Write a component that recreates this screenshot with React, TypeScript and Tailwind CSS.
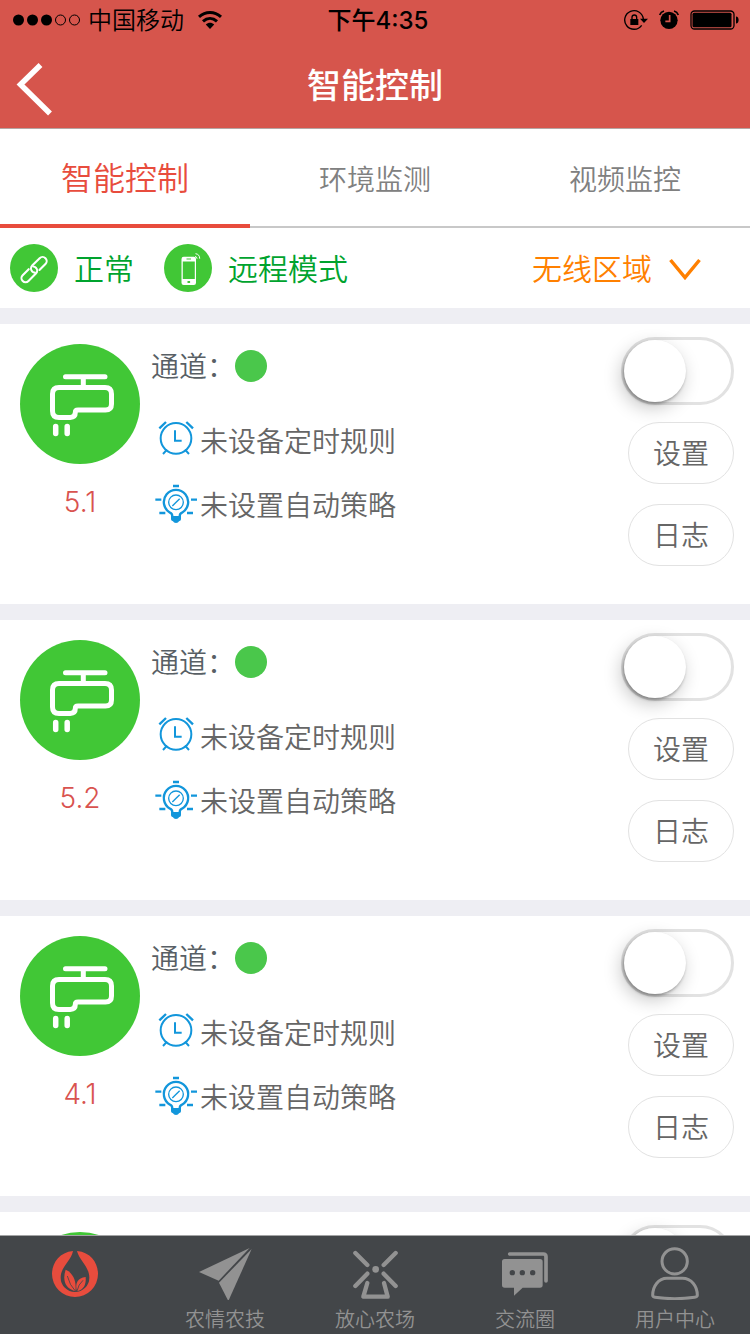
import { useState } from 'react';
import type { ReactNode } from 'react';

interface Channel {
  id: string;
  timer: string;
  strategy: string;
}

const CHANNELS: Channel[] = [
  { id: '5.1', timer: '未设备定时规则', strategy: '未设置自动策略' },
  { id: '5.2', timer: '未设备定时规则', strategy: '未设置自动策略' },
  { id: '4.1', timer: '未设备定时规则', strategy: '未设置自动策略' },
  { id: '4.2', timer: '未设备定时规则', strategy: '未设置自动策略' },
];

const TABS = ['智能控制', '环境监测', '视频监控'];

function StatusBar() {
  return (
    <div className="grid h-10 grid-cols-3 items-center pl-3 pr-[11px] text-2xl text-black">
      <div className="flex items-center">
        <svg width="70" height="14" viewBox="0 0 70 14" className="mr-[6px]" aria-hidden="true">
          <circle cx="6.5" cy="7" r="5.5" />
          <circle cx="20.5" cy="7" r="5.5" />
          <circle cx="34.5" cy="7" r="5.5" />
          <circle cx="48.5" cy="7" r="5" fill="none" stroke="black" />
          <circle cx="62.5" cy="7" r="5" fill="none" stroke="black" />
        </svg>
        <span className="pt-[2px]">中国移动</span>
        <svg width="26" height="20" viewBox="0 0 26 20" className="ml-[13px]" fill="none" stroke="black" strokeWidth="3" aria-hidden="true">
          <path d="M2 6.8C8.5.9 17.5.9 24 6.8" />
          <path d="M6 11.3c4.2-3.8 9.800-3.800 14 0" />
          <path d="M8.8 14.5c2.600-2.300 5.800-2.300 8.400 0L13 19z" fill="black" stroke="none" />
        </svg>
      </div>
      <div className="pl-[5px] pt-[2px] text-center font-medium">下午4:35</div>
      <div className="flex items-center justify-end gap-[11px]">
        <svg width="24" height="22" viewBox="68 27 72 66" aria-hidden="true">
          <path d="M121 76a28 28 0 1 1 5-19" fill="none" stroke="black" strokeWidth="4" />
          <path d="M116 56h24l-12 13z" />
          <path d="M87 57h24v18H87z" />
          <path d="M92 58v-6a7 7 0 0 1 14 0v6" fill="none" stroke="black" strokeWidth="4" />
        </svg>
        <svg width="20" height="22" viewBox="176 27 60 66" aria-hidden="true">
          <circle cx="206" cy="61" r="26" />
          <path d="M178 45q3-9 13-12M234 45q-3-9-13-12" fill="none" stroke="black" strokeWidth="5" />
          <path d="M208 45v19h-13" fill="none" stroke="#d6554c" strokeWidth="5" />
        </svg>
        <svg width="49" height="20" viewBox="0 0 49 20" aria-hidden="true">
          <rect x="1" y="1" width="43" height="18" rx="3.5" fill="none" stroke="black" strokeWidth="1.3" />
          <rect x="2.5" y="2.7" width="39" height="14.6" rx="1.5" />
          <path d="M46 6.5c3.500 0 3.500 7 0 7z" />
        </svg>
      </div>
    </div>
  );
}

function LinkIcon() {
  return (
    <svg className="size-12" viewBox="0 0 48 48" fill="none" aria-hidden="true">
      <circle cx="24" cy="24" r="24" fill="#41c736" />
      <g transform="rotate(-45 24 25.5)" stroke="white" strokeWidth="2.1" strokeLinecap="round">
        <path d="M20.5 21.5H12a4.100 4.100 0 0 0 0 8.200h10.500a4.100 4.100 0 0 0 4.100-4.100q0-1.600-1-2.700" />
        <path d="M27.5 29.7H36a4.100 4.100 0 0 0 0-8.200H25.500a4.100 4.100 0 0 0-4.100 4.100q0 1.600 1 2.700" />
      </g>
    </svg>
  );
}

function PhoneIcon() {
  return (
    <svg className="size-12" viewBox="0 0 48 48" aria-hidden="true">
      <circle cx="24" cy="24" r="24" fill="#41c736" />
      <rect x="17.5" y="12.7" width="14.5" height="28.3" rx="2.2" fill="white" />
      <path d="M18.800 17.500h12V35h-12zM22.500 14.500h4.500v1h-4.500zM23.500 37h2.600v2h-2.600z" fill="#41c736" />
      <path d="M31 12.500q2 .2 2 2.200M31.500 9.700q4.200.5 4.200 5" fill="none" stroke="white" />
    </svg>
  );
}

function FaucetIcon() {
  return (
    <svg className="size-[120px]" viewBox="0 0 120 120" fill="none" aria-hidden="true">
      <circle cx="60" cy="60" r="60" fill="#41c736" />
      <g stroke="white" strokeWidth="5" strokeLinecap="round">
        <path d="M45.5 32.8H85M63.300 33v10" />
        <path d="M39 43.600h46q6.500 0 6.500 6.500v10q0 6-6 6H58q-2.700 0-2.700 2.500 0 4.800-5 4.800H39q-6.500 0-6.500-6.500V50q0-6.400 6.500-6.400z" />
        <path strokeWidth="5.5" d="M35.700 82.500v7M47.200 82.500v7" />
      </g>
    </svg>
  );
}

function ClockIcon() {
  return (
    <svg className="h-10 w-[42px] shrink-0 overflow-visible" viewBox="465 306 126 120" fill="none" stroke="#1296db" strokeWidth="6" aria-hidden="true">
      <circle cx="528" cy="355" r="46" />
      <path d="M525 331v31h20M489 402l12-13M567 402l-12-13" />
      <path strokeWidth="7" d="M478 325l20-19M579 325l-20-19" />
    </svg>
  );
}

function BulbIcon() {
  return (
    <svg className="h-10 w-[42px] shrink-0 overflow-visible" viewBox="465 498 126 120" fill="none" stroke="#1296db" strokeWidth="7" aria-hidden="true">
      <path d="M517 590q0-10-7-12a36.500 36.500 0 1 1 36 0q-7 2-7 12" />
      <circle cx="528" cy="547" r="22" strokeWidth="4" />
      <path strokeWidth="4" d="M517 558l22-22" />
      <path d="M519 498h18M466 539h18M573 539h18M478 579h18M561 579h18" />
      <path d="M513 588h30v10q0 5-6 6-2 5-9 5t-9-5q-6-1-6-6z" fill="#1296db" stroke="none" />
    </svg>
  );
}

function ChannelCard({ channel }: { channel: Channel }) {
  return (
    <li className="flex h-[280px] bg-white pl-5 pr-4 text-[28px] leading-10 text-[#666]">
      <div className="flex w-[120px] flex-col items-center pt-5">
        <FaucetIcon />
        <span className="mt-[18px] text-[#d9534f]">{channel.id}</span>
      </div>
      <div className="ml-[11px] flex-1 pt-[26px]">
        <div className="flex h-8 items-center text-[#585f65]">
          <span className="pt-[2px]">通道：</span>
          <span className="size-8 rounded-full bg-[#4ac74b]" />
        </div>
        <div className="mt-10 flex items-center gap-[3px] pl-1">
          <ClockIcon />
          <span>{channel.timer}</span>
        </div>
        <div className="mt-6 flex items-center gap-[3px] pl-1">
          <BulbIcon />
          <span>{channel.strategy}</span>
        </div>
      </div>
      <div className="flex flex-col items-end pt-[13px]">
        <input
          type="checkbox"
          role="switch"
          aria-label={`${channel.id} 开关`}
          className="flex h-[68px] w-[113px] cursor-pointer appearance-none items-center rounded-full border-[3px] border-[#e2e2e2] bg-white before:size-[62px] before:rounded-full before:bg-white before:shadow-[-3px_6px_18px_rgba(0,0,0,0.22),-1px_2px_3px_rgba(0,0,0,0.3)] before:transition-transform before:content-[''] checked:bg-[#41c736] checked:before:translate-x-[45px]"
        />
        <button type="button" className="mt-[17px] h-[62px] w-[106px] rounded-full border border-[#e2e2e2] pt-[2px]">
          设置
        </button>
        <button type="button" className="mt-5 h-[62px] w-[106px] rounded-full border border-[#e2e2e2] pt-[2px]">
          日志
        </button>
      </div>
    </li>
  );
}

interface NavItemProps {
  label?: string;
  name: string;
  viewBox: string;
  children: ReactNode;
}

function NavItem({ label, name, viewBox, children }: NavItemProps) {
  return (
    <a href="#" aria-label={name} className="flex flex-1 flex-col items-center gap-[6px] pt-[10px] text-xl leading-7 text-[#929292]">
      <svg className="h-[54px] w-[60px] shrink-0" viewBox={viewBox} fill="currentColor" aria-hidden="true">
        {children}
      </svg>
      {label && <span>{label}</span>}
    </a>
  );
}

function BottomNav() {
  return (
    <nav className="flex h-[99px] shrink-0 border-t border-[#a3a4a5] bg-[#434649]">
      <NavItem name="首页" viewBox="135 168 180 162">
        <g fill="#e84c3d">
          <path d="M219 183C177 187 156 220 156 252a69 69 0 0 0 138 0c0-32-20-65-63-69 7 28 37 47 37 80a43 43 0 0 1-86 0c0-33 31-49 37-80z" />
          <path d="M197 239c-10 30-3 56 29 65 4-28-5-54-29-65z" />
          <path d="M257 261c-24 2-33 19-26 43 20-5 28-20 26-43z" />
        </g>
        <path d="M202 258q7 28 24 45M249 271q-14 12-18 32" fill="none" stroke="#434649" strokeWidth="2.5" />
      </NavItem>
      <NavItem name="农情农技" label="农情农技" viewBox="585 168 180 162">
        <path d="M597 246l152-72-93 98z" />
        <path d="M755 177l-70 156-28-55z" />
      </NavItem>
      <NavItem name="放心农场" label="放心农场" viewBox="135 168 180 162">
        <g fill="none" stroke="currentColor" strokeWidth="13" strokeLinecap="round" strokeLinejoin="round">
          <path d="M166 189l36 36M287 189l-36 36M202 251l-36 37M251 251l36 37" />
          <path d="M202 279l-12 41h73l-11-41" />
        </g>
        <circle cx="227" cy="238" r="10" />
      </NavItem>
      <NavItem name="交流圈" label="交流圈" viewBox="585 168 180 162">
        <path d="M629 192h101q8 0 8 8v73" fill="none" stroke="currentColor" strokeWidth="11" strokeLinecap="round" />
        <path d="M614 207h106q8 0 8 8v70q0 8-8 8h-52l-26 24v-24h-28q-8 0-8-8v-70q0-8 8-8z" />
        <g fill="#434649">
          <circle cx="637" cy="248" r="8" />
          <circle cx="667" cy="248" r="8" />
          <circle cx="698" cy="248" r="8" />
        </g>
      </NavItem>
      <NavItem name="用户中心" label="用户中心" viewBox="255 168 180 162">
        <g fill="none" stroke="currentColor" strokeWidth="9">
          <circle cx="344" cy="214" r="38" />
          <path d="M321 265h46c28 0 45 24 45 51q0 5-8 6-60 8-119 0-7-1-7-6c0-27 17-51 43-51z" />
        </g>
      </NavItem>
    </nav>
  );
}

export default function App() {
  const [tab, setTab] = useState(0);

  return (
    <div className="flex h-screen flex-col overflow-hidden bg-[#eeeef3] font-['Inter','Noto_Sans_CJK_SC',sans-serif] font-[350]">
      <header className="shrink-0 border-b border-[#b5a5a3] bg-[#d6554c]">
        <StatusBar />
        <div className="flex h-[88px] items-center px-4">
          <button type="button" aria-label="返回" className="w-9 pt-[10px]">
            <svg className="h-[54px] w-9" viewBox="0 0 36 54" fill="none" stroke="white" strokeWidth="5.5" aria-hidden="true">
              <path d="M24.5 3l-20 19.500L34 51.500" />
            </svg>
          </button>
          <h1 className="mr-9 flex-1 pt-[2px] text-center text-[34px] font-medium text-white">智能控制</h1>
        </div>
      </header>

      <div role="tablist" className="flex h-[99px] shrink-0 bg-white">
        {TABS.map((name, i) => (
          <button
            key={name}
            type="button"
            role="tab"
            aria-selected={tab === i}
            onClick={() => setTab(i)}
            className={
              tab === i
                ? 'flex-1 border-b-4 border-[#e84c3d] pt-1 text-[32px] text-[#e84c3d]'
                : 'flex-1 border-b-2 border-[#c8c8c8] pt-1 text-[28px] text-[#808080]'
            }
          >
            {name}
          </button>
        ))}
      </div>

      <div className="flex h-20 shrink-0 items-center bg-white pl-[10px] text-3xl text-[#00a32e]">
        <LinkIcon />
        <span className="ml-4 pt-[2px]">正常</span>
        <span className="ml-[30px]">
          <PhoneIcon />
        </span>
        <span className="ml-4 pt-[2px]">远程模式</span>
        <label className="ml-auto mr-[49px] flex items-center gap-[17px] pt-[2px] text-[#ff8000]">
          <select aria-label="区域" className="appearance-none bg-transparent">
            <option>无线区域</option>
          </select>
          <svg width="32" height="22" viewBox="0 0 32 22" fill="none" stroke="currentColor" strokeWidth="3.5" aria-hidden="true">
            <path d="M1.5 2L16 19.500 30.500 2" />
          </svg>
        </label>
      </div>

      <main className="flex-1 overflow-y-auto pt-4 [scrollbar-width:none]">
        <ul className="flex flex-col gap-4">
          {CHANNELS.map((channel) => (
            <ChannelCard key={channel.id} channel={channel} />
          ))}
        </ul>
      </main>

      <BottomNav />
    </div>
  );
}
